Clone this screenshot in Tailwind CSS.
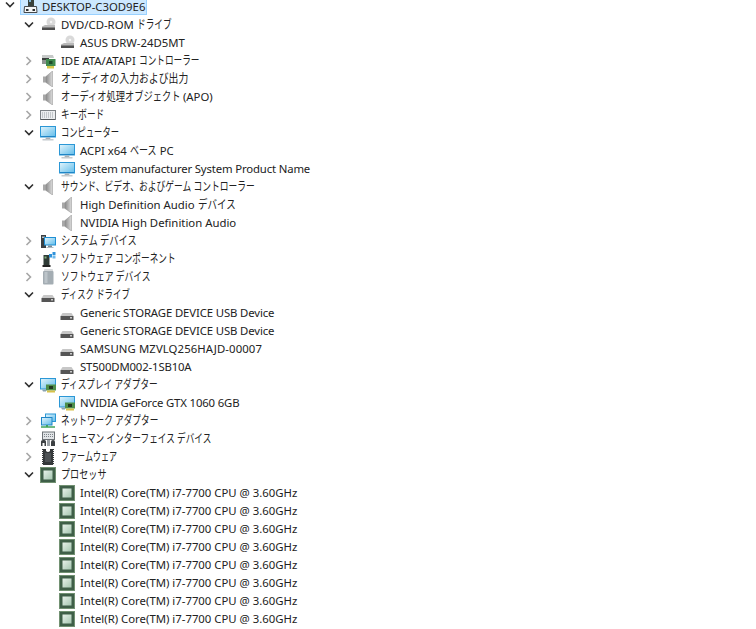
<!DOCTYPE html>
<html lang="ja">
<head>
<meta charset="utf-8">
<script src="https://cdn.jsdelivr.net/npm/@tailwindcss/browser@4"></script>
</head>
<body class="bg-white overflow-hidden">
<svg class="absolute w-0 h-0" aria-hidden="true">
<defs>
<linearGradient id="scr" x1="0" y1="0" x2="1" y2="1"><stop offset="0" stop-color="#e4f5fc"/><stop offset="1" stop-color="#5fbcea"/></linearGradient>
<linearGradient id="spk" x1="0" y1="0" x2="1" y2="0"><stop offset="0" stop-color="#8c8c8c"/><stop offset="1" stop-color="#dcdcdc"/></linearGradient>
<linearGradient id="core" x1="0" y1="0" x2="1" y2="1"><stop offset="0" stop-color="#e8f1ea"/><stop offset="1" stop-color="#a5c6b0"/></linearGradient>
<symbol id="i-root" viewBox="0 0 16 16"><rect x="6" y="0" width="6" height="7" fill="#39423c"/><rect x="7" y="1" width="2" height="2" fill="#7fb6d8"/><path d="M2.500 7.500h12l.5 6H2z" fill="#f4f6f7" stroke="#45494c"/><rect x="4" y="10" width="2.500" height="2" fill="#2d3033"/><rect x="10.500" y="10" width="2.500" height="2" fill="#2d3033"/></symbol>
<symbol id="i-dvd" viewBox="0 0 16 16"><circle cx="11" cy="5" r="4.500" fill="#d9d9d9"/><circle cx="11" cy="5" r="1.200" fill="#f5f5f5"/><path d="M2 9.500 5 8h10v3H2z" fill="#b9b9b9"/><rect x="2" y="10.500" width="13" height="2.500" fill="#4e4e4e"/></symbol>
<symbol id="i-hdd" viewBox="0 0 16 16"><path d="M3.500 8h9l2 3h-13z" fill="#c7c7c7"/><rect x="1.500" y="11" width="13" height="4" fill="#555"/><rect x="11" y="12" width="2" height="1.500" fill="#c9c9c9"/></symbol>
<symbol id="i-ide" viewBox="0 0 16 16"><path d="M2 2h11l1 3H2z" fill="#c6c9c8"/><rect x="2" y="5" width="7" height="2" fill="#3c3f3e"/><rect x="2" y="7" width="4" height="4" fill="#8f9492"/><rect x="6" y="6" width="9.500" height="7" fill="#3f8a4e"/><rect x="9" y="8" width="3.500" height="3" fill="#1f4d2a"/><rect x="7" y="13" width="7" height="2.500" fill="#d6c84a"/></symbol>
<symbol id="i-spk" viewBox="0 0 16 16"><rect x="3" y="5.500" width="3" height="6" fill="#a8a8a8"/><path d="M6 5.500 12.500 0v16L6 11.500z" fill="url(#spk)" stroke="#8d8d8d" stroke-width=".5"/></symbol>
<symbol id="i-kbd" viewBox="0 0 16 16"><rect x=".5" y="3.500" width="15" height="9" fill="#eceef0" stroke="#7d8286"/><path d="M2 6h12M2 8h12M2 10h12" stroke="#9aa0a5" stroke-width="1" stroke-dasharray="1 1"/><rect x="1" y="12" width="14" height="1" fill="#55595c"/></symbol>
<symbol id="i-mon" viewBox="0 0 16 16"><rect x=".5" y="1.500" width="15" height="10.500" fill="url(#scr)" stroke="#2b97d6"/><rect x="1" y="11" width="14" height="1" fill="#1f85c6"/><path d="M6 12.500h4l.5 1.500h-5z" fill="#a9b0b5"/><rect x="2.500" y="14" width="11" height="1.500" fill="#c4cace"/></symbol>
<symbol id="i-sys" viewBox="0 0 16 16"><rect x="1" y="2" width="5" height="13" fill="#3b3f42"/><rect x="2" y="3.500" width="3" height="1.500" fill="#b8bdc0"/><rect x="4.500" y="4.500" width="11" height="7.500" fill="url(#scr)" stroke="#1f8fd4"/><path d="M8 12.500h4v1.500H8z" fill="#7a8a94"/><rect x="6.500" y="14" width="7" height="1" fill="#aebac2"/></symbol>
<symbol id="i-swc" viewBox="0 0 16 16"><rect x="3.500" y="4" width="6" height="10" fill="#2e3a35"/><rect x="4.500" y="5.500" width="2" height="2" fill="#7fb07a"/><rect x="2.500" y="14" width="8" height="2" fill="#222"/><rect x="9" y="3" width="3" height="3.500" fill="#2f92da"/><rect x="12.500" y="1" width="3" height="3" fill="#2f92da"/><rect x="12.500" y="4.500" width="3" height="3" fill="#6fb9ea"/></symbol>
<symbol id="i-swd" viewBox="0 0 16 16"><rect x="4" y="0" width="9" height="3" rx="1" fill="#d6d9db"/><rect x="3" y="2" width="10.500" height="13.500" rx="1" fill="#a4adb3"/><rect x="4.500" y="3" width="3" height="11" fill="#bcc4c9"/></symbol>
<symbol id="i-gpu" viewBox="0 0 16 16"><rect x=".5" y="1.500" width="15" height="10.500" fill="url(#scr)" stroke="#2b97d6"/><rect x="6" y="7.500" width="10" height="6" fill="#4e8f4c"/><rect x="9" y="9" width="4" height="3" fill="#22381f"/><rect x="7" y="13.500" width="8" height="2" fill="#d7c24a"/><path d="M2 12.500h4v2H3z" fill="#8aa3b1"/></symbol>
<symbol id="i-net" viewBox="0 0 16 16"><rect x="5.500" y="1" width="10" height="7.500" fill="url(#scr)" stroke="#2b97d6"/><rect x="1.500" y="4.500" width="10.500" height="7.500" fill="url(#scr)" stroke="#1f85c6"/><path d="M1 14h14" stroke="#3fa35b" stroke-width="1.500"/><path d="M7 12v2" stroke="#3fa35b" stroke-width="2"/></symbol>
<symbol id="i-hid" viewBox="0 0 16 16"><rect x="2.500" y="1" width="12" height="7.500" fill="#e1e4e7" stroke="#6d7276"/><path d="M4 3.500h9M4 5.500h9" stroke="#7d8489" stroke-dasharray="1 1"/><path d="M1 15V10.500Q1 9 3 9h1.500q1.500 0 1.500 1.500V15H4.500v-3H2.500v3z" fill="#3c4043"/><rect x="7" y="9" width="3" height="6" fill="#9aa0a5"/><path d="M11 15v-4q0-2 2-2t2 2v4z" fill="#3c4043"/></symbol>
<symbol id="i-fw" viewBox="0 0 16 16"><rect x="2" y="0" width="12" height="16" fill="#34383a"/><path d="M6 0h4v2q-2 2-4 0z" fill="#fff"/><path d="M2.500 1v15M13.500 1v15" stroke="#f2f2f2" stroke-dasharray="1 1" stroke-width="1"/><rect x="5" y="4" width="6" height="9" fill="#4c5154"/></symbol>
<symbol id="i-cpu" viewBox="0 0 16 16"><rect x="0" y="0" width="16" height="16" fill="#3f5f48"/><rect x=".5" y=".5" width="15" height="15" fill="none" stroke="#a7c49c" stroke-dasharray="1 1"/><rect x="3.500" y="3.500" width="9" height="9" fill="url(#core)"/></symbol>
<symbol id="c-open" viewBox="0 0 16 16"><path d="M4 5.500 8 9.500 12 5.500" fill="none" stroke="#2f2f2f" stroke-width="1.600"/></symbol>
<symbol id="c-shut" viewBox="0 0 16 16"><path d="M5.500 4 9.500 8 5.500 12" fill="none" stroke="#a6a6a6" stroke-width="1.600"/></symbol>
</defs>
</svg>

<main class="-mt-[2px] flex flex-col text-[11.35px] leading-[18px] text-[#222222] whitespace-nowrap" style="font-family:'Noto Sans','Noto Sans CJK JP',sans-serif">

<div class="flex h-[18px] items-start pl-[2px]"><svg class="w-4 h-4 -mt-[1px]"><use href="#c-open"/></svg><div class="ml-[2px] h-[17px] w-[127px] flex items-center pl-[1px] bg-[#cce8ff] border border-[#99d1ff]"><svg class="w-4 h-4 shrink-0"><use href="#i-root"/></svg><span class="ml-[4px] leading-[15px]">DESKTOP-C3OD9E6</span></div></div>

<div class="flex h-[18px] items-center pl-[21px]"><svg class="w-4 h-4"><use href="#c-open"/></svg><svg class="w-4 h-4 ml-[3px]"><use href="#i-dvd"/></svg><span class="ml-[5px]">DVD/CD-ROM <span class="inline-block text-[12px] w-[34px] origin-left scale-x-[0.72]">ドライブ</span></span></div>
<div class="flex h-[18px] items-center pl-[40px]"><svg class="w-4 h-4 ml-[19px]"><use href="#i-dvd"/></svg><span class="ml-[5px]">ASUS DRW-24D5MT</span></div>
<div class="flex h-[18px] items-center pl-[21px]"><svg class="w-4 h-4"><use href="#c-shut"/></svg><svg class="w-4 h-4 ml-[3px]"><use href="#i-ide"/></svg><span class="ml-[5px]">IDE ATA/ATAPI <span class="inline-block text-[12px] w-[60px] origin-left scale-x-[0.72]">コントローラー</span></span></div>
<div class="flex h-[18px] items-center pl-[21px]"><svg class="w-4 h-4"><use href="#c-shut"/></svg><svg class="w-4 h-4 ml-[3px]"><use href="#i-spk"/></svg><span class="ml-[5px] inline-block text-[12px] w-[128px] origin-left scale-x-[0.82]">オーディオの入力および出力</span></div>
<div class="flex h-[18px] items-center pl-[21px]"><svg class="w-4 h-4"><use href="#c-shut"/></svg><svg class="w-4 h-4 ml-[3px]"><use href="#i-spk"/></svg><span class="ml-[5px]"><span class="inline-block text-[12px] w-[119px] origin-left scale-x-[0.77]">オーディオ処理オブジェクト</span> (APO)</span></div>
<div class="flex h-[18px] items-center pl-[21px]"><svg class="w-4 h-4"><use href="#c-shut"/></svg><svg class="w-4 h-4 ml-[3px]"><use href="#i-kbd"/></svg><span class="ml-[5px] inline-block text-[12px] w-[43px] origin-left scale-x-[0.72]">キーボード</span></div>
<div class="flex h-[18px] items-center pl-[21px]"><svg class="w-4 h-4"><use href="#c-open"/></svg><svg class="w-4 h-4 ml-[3px]"><use href="#i-mon"/></svg><span class="ml-[5px] inline-block text-[12px] w-[58px] origin-left scale-x-[0.69]">コンピューター</span></div>
<div class="flex h-[18px] items-center pl-[40px]"><svg class="w-4 h-4 ml-[19px]"><use href="#i-mon"/></svg><span class="ml-[5px]">ACPI x64 <span class="inline-block text-[12px] w-[27px] origin-left scale-x-[0.75]">ベース</span> PC</span></div>
<div class="flex h-[18px] items-center pl-[40px]"><svg class="w-4 h-4 ml-[19px]"><use href="#i-mon"/></svg><span class="ml-[5px] tracking-[-0.15px]">System manufacturer System Product Name</span></div>
<div class="flex h-[18px] items-center pl-[21px]"><svg class="w-4 h-4"><use href="#c-open"/></svg><svg class="w-4 h-4 ml-[3px]"><use href="#i-spk"/></svg><span class="ml-[5px] inline-block text-[12px] w-[195px] origin-left scale-x-[0.73]">サウンド、ビデオ、およびゲーム コントローラー</span></div>
<div class="flex h-[18px] items-center pl-[40px]"><svg class="w-4 h-4 ml-[19px]"><use href="#i-spk"/></svg><span class="ml-[5px]">High Definition Audio <span class="inline-block text-[12px] w-[38px] origin-left scale-x-[0.79]">デバイス</span></span></div>
<div class="flex h-[18px] items-center pl-[40px]"><svg class="w-4 h-4 ml-[19px]"><use href="#i-spk"/></svg><span class="ml-[5px]">NVIDIA High Definition Audio</span></div>
<div class="flex h-[18px] items-center pl-[21px]"><svg class="w-4 h-4"><use href="#c-shut"/></svg><svg class="w-4 h-4 ml-[3px]"><use href="#i-sys"/></svg><span class="ml-[5px] inline-block text-[12px] w-[76px] origin-left scale-x-[0.77]">システム デバイス</span></div>
<div class="flex h-[18px] items-center pl-[21px]"><svg class="w-4 h-4"><use href="#c-shut"/></svg><svg class="w-4 h-4 ml-[3px]"><use href="#i-swc"/></svg><span class="ml-[5px] inline-block text-[12px] w-[114px] origin-left scale-x-[0.72]">ソフトウェア コンポーネント</span></div>
<div class="flex h-[18px] items-center pl-[21px]"><svg class="w-4 h-4"><use href="#c-shut"/></svg><svg class="w-4 h-4 ml-[3px]"><use href="#i-swd"/></svg><span class="ml-[5px] inline-block text-[12px] w-[89px] origin-left scale-x-[0.73]">ソフトウェア デバイス</span></div>
<div class="flex h-[18px] items-center pl-[21px]"><svg class="w-4 h-4"><use href="#c-open"/></svg><svg class="w-4 h-4 ml-[3px]"><use href="#i-hdd"/></svg><span class="ml-[5px] inline-block text-[12px] w-[69px] origin-left scale-x-[0.70]">ディスク ドライブ</span></div>
<div class="flex h-[18px] items-center pl-[40px]"><svg class="w-4 h-4 ml-[19px]"><use href="#i-hdd"/></svg><span class="ml-[5px] tracking-[-0.12px]">Generic STORAGE DEVICE USB Device</span></div>
<div class="flex h-[18px] items-center pl-[40px]"><svg class="w-4 h-4 ml-[19px]"><use href="#i-hdd"/></svg><span class="ml-[5px] tracking-[-0.12px]">Generic STORAGE DEVICE USB Device</span></div>
<div class="flex h-[18px] items-center pl-[40px]"><svg class="w-4 h-4 ml-[19px]"><use href="#i-hdd"/></svg><span class="ml-[5px] tracking-[0.1px]">SAMSUNG MZVLQ256HAJD-00007</span></div>
<div class="flex h-[18px] items-center pl-[40px]"><svg class="w-4 h-4 ml-[19px]"><use href="#i-hdd"/></svg><span class="ml-[5px] tracking-[-0.15px]">ST500DM002-1SB10A</span></div>
<div class="flex h-[18px] items-center pl-[21px]"><svg class="w-4 h-4"><use href="#c-open"/></svg><svg class="w-4 h-4 ml-[3px]"><use href="#i-gpu"/></svg><span class="ml-[5px] inline-block text-[12px] w-[97px] origin-left scale-x-[0.72]">ディスプレイ アダプター</span></div>
<div class="flex h-[18px] items-center pl-[40px]"><svg class="w-4 h-4 ml-[19px]"><use href="#i-gpu"/></svg><span class="ml-[5px] tracking-[-0.15px]">NVIDIA GeForce GTX 1060 6GB</span></div>
<div class="flex h-[18px] items-center pl-[21px]"><svg class="w-4 h-4"><use href="#c-shut"/></svg><svg class="w-4 h-4 ml-[3px]"><use href="#i-net"/></svg><span class="ml-[5px] inline-block text-[12px] w-[97px] origin-left scale-x-[0.72]">ネットワーク アダプター</span></div>
<div class="flex h-[18px] items-center pl-[21px]"><svg class="w-4 h-4"><use href="#c-shut"/></svg><svg class="w-4 h-4 ml-[3px]"><use href="#i-hid"/></svg><span class="ml-[5px] inline-block text-[12px] w-[151px] origin-left scale-x-[0.72]">ヒューマン インターフェイス デバイス</span></div>
<div class="flex h-[18px] items-center pl-[21px]"><svg class="w-4 h-4"><use href="#c-shut"/></svg><svg class="w-4 h-4 ml-[3px]"><use href="#i-fw"/></svg><span class="ml-[5px] inline-block text-[12px] w-[56px] origin-left scale-x-[0.67]">ファームウェア</span></div>
<div class="flex h-[18px] items-center pl-[21px]"><svg class="w-4 h-4"><use href="#c-open"/></svg><svg class="w-4 h-4 ml-[3px]"><use href="#i-cpu"/></svg><span class="ml-[5px] inline-block text-[12px] w-[45px] origin-left scale-x-[0.76]">プロセッサ</span></div>
<div class="flex h-[18px] items-center pl-[40px]"><svg class="w-4 h-4 ml-[19px]"><use href="#i-cpu"/></svg><span class="ml-[5px]">Intel(R) Core(TM) i7-7700 CPU @ 3.60GHz</span></div>
<div class="flex h-[18px] items-center pl-[40px]"><svg class="w-4 h-4 ml-[19px]"><use href="#i-cpu"/></svg><span class="ml-[5px]">Intel(R) Core(TM) i7-7700 CPU @ 3.60GHz</span></div>
<div class="flex h-[18px] items-center pl-[40px]"><svg class="w-4 h-4 ml-[19px]"><use href="#i-cpu"/></svg><span class="ml-[5px]">Intel(R) Core(TM) i7-7700 CPU @ 3.60GHz</span></div>
<div class="flex h-[18px] items-center pl-[40px]"><svg class="w-4 h-4 ml-[19px]"><use href="#i-cpu"/></svg><span class="ml-[5px]">Intel(R) Core(TM) i7-7700 CPU @ 3.60GHz</span></div>
<div class="flex h-[18px] items-center pl-[40px]"><svg class="w-4 h-4 ml-[19px]"><use href="#i-cpu"/></svg><span class="ml-[5px]">Intel(R) Core(TM) i7-7700 CPU @ 3.60GHz</span></div>
<div class="flex h-[18px] items-center pl-[40px]"><svg class="w-4 h-4 ml-[19px]"><use href="#i-cpu"/></svg><span class="ml-[5px]">Intel(R) Core(TM) i7-7700 CPU @ 3.60GHz</span></div>
<div class="flex h-[18px] items-center pl-[40px]"><svg class="w-4 h-4 ml-[19px]"><use href="#i-cpu"/></svg><span class="ml-[5px]">Intel(R) Core(TM) i7-7700 CPU @ 3.60GHz</span></div>
<div class="flex h-[18px] items-center pl-[40px]"><svg class="w-4 h-4 ml-[19px]"><use href="#i-cpu"/></svg><span class="ml-[5px]">Intel(R) Core(TM) i7-7700 CPU @ 3.60GHz</span></div>
</main>
</body>
</html>
